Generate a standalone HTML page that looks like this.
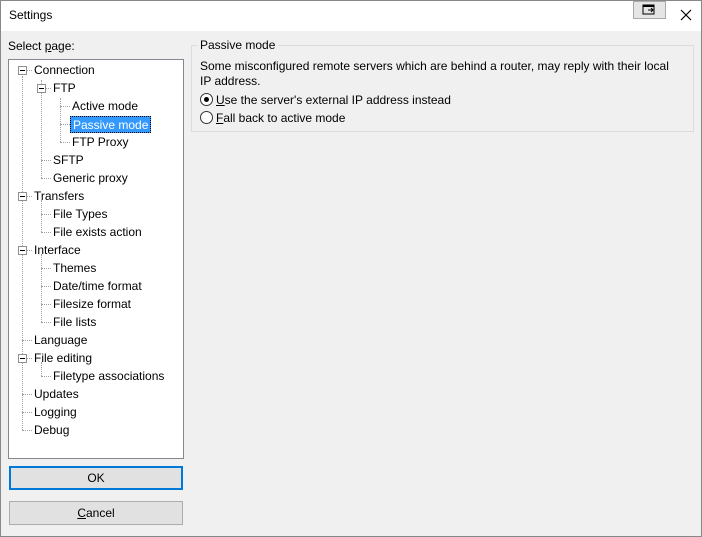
<!DOCTYPE html><html><head><style>
*{margin:0;padding:0;box-sizing:border-box}
body{width:702px;height:537px;background:#f0f0f0;font:12px "Liberation Sans",sans-serif;color:#000;position:relative;overflow:hidden}
.a{position:absolute;white-space:nowrap}
.win{position:absolute;left:0;top:0;width:702px;height:537px;border:1px solid #888}
.title{position:absolute;left:1px;top:1px;width:700px;height:30px;background:#fff}
.tree{position:absolute;left:8px;top:59px;width:176px;height:400px;background:#fff;border:1px solid #828790}
.it{position:absolute;height:16px;line-height:16px;white-space:nowrap}
.dv{position:absolute;border-left:1px dotted #a0a0a0;width:0}
.dh{position:absolute;border-top:1px dotted #a0a0a0;height:0}
.bx{position:absolute;width:9px;height:9px;border:1px solid #919191;background:#fff}
.bx:after{content:"";position:absolute;left:1px;top:3px;width:5px;height:1px;background:#000}
.btn{position:absolute;left:9px;width:174px;height:24px;background:#e1e1e1;border:1px solid #adadad;text-align:center;line-height:22px}
.rad{position:absolute;width:13px;height:13px;border:1px solid #333;border-radius:50%;background:#fff}
</style></head><body>
<div class="win"></div>
<div class="title"></div>
<div class="a" style="left:9px;top:8px">Settings</div>
<div class="a" style="left:633px;top:1px;width:33px;height:18px;border:1px solid #aaa;background:#e5e5e5"></div>
<svg class="a" style="left:642px;top:4px" width="14" height="12"><rect x="1" y="1" width="11" height="9" fill="none" stroke="#000" stroke-width="1"/><line x1="1" y1="2" x2="12" y2="2" stroke="#000" stroke-width="2"/><path d="M6 6h5M9 4l2 2-2 2" stroke="#000" fill="none"/></svg>
<svg class="a" style="left:680px;top:9px" width="12" height="12"><path d="M1 1L11 11M11 1L1 11" stroke="#000" stroke-width="1.2"/></svg>
<div class="a" style="left:8px;top:39px">Select <u>p</u>age:</div>
<div class="tree"></div>
<!-- tree lines -->
<div class="dv" style="left:22px;top:76px;height:354px"></div>
<div class="dv" style="left:41px;top:80px;height:98px"></div>
<div class="dv" style="left:60px;top:98px;height:44px"></div>
<div class="dv" style="left:41px;top:200px;height:32px"></div>
<div class="dv" style="left:41px;top:254px;height:68px"></div>
<div class="dv" style="left:41px;top:362px;height:14px"></div>
<div class="dh" style="left:27px;top:70px;width:5px"></div>
<div class="dh" style="left:46px;top:88px;width:5px"></div>
<div class="dh" style="left:60px;top:106px;width:10px"></div>
<div class="dh" style="left:60px;top:124px;width:10px"></div>
<div class="dh" style="left:60px;top:142px;width:10px"></div>
<div class="dh" style="left:41px;top:160px;width:10px"></div>
<div class="dh" style="left:41px;top:178px;width:10px"></div>
<div class="dh" style="left:27px;top:196px;width:5px"></div>
<div class="dh" style="left:41px;top:214px;width:10px"></div>
<div class="dh" style="left:41px;top:232px;width:10px"></div>
<div class="dh" style="left:27px;top:250px;width:5px"></div>
<div class="dh" style="left:41px;top:268px;width:10px"></div>
<div class="dh" style="left:41px;top:286px;width:10px"></div>
<div class="dh" style="left:41px;top:304px;width:10px"></div>
<div class="dh" style="left:41px;top:322px;width:10px"></div>
<div class="dh" style="left:22px;top:340px;width:10px"></div>
<div class="dh" style="left:27px;top:358px;width:5px"></div>
<div class="dh" style="left:41px;top:376px;width:10px"></div>
<div class="dh" style="left:22px;top:394px;width:10px"></div>
<div class="dh" style="left:22px;top:412px;width:10px"></div>
<div class="dh" style="left:22px;top:430px;width:10px"></div>
<div class="bx" style="left:18px;top:66px"></div>
<div class="bx" style="left:37px;top:84px"></div>
<div class="bx" style="left:18px;top:192px"></div>
<div class="bx" style="left:18px;top:246px"></div>
<div class="bx" style="left:18px;top:354px"></div>
<div class="it" style="left:34px;top:62px">Connection</div>
<div class="it" style="left:53px;top:80px">FTP</div>
<div class="it" style="left:72px;top:98px">Active mode</div>
<div class="it" style="left:70px;top:116px;background:#3399ff;color:#fff;padding:0 2px;border:1px dotted #000;height:17px">Passive mode</div>
<div class="it" style="left:72px;top:134px">FTP Proxy</div>
<div class="it" style="left:53px;top:152px">SFTP</div>
<div class="it" style="left:53px;top:170px">Generic proxy</div>
<div class="it" style="left:34px;top:188px">Transfers</div>
<div class="it" style="left:53px;top:206px">File Types</div>
<div class="it" style="left:53px;top:224px">File exists action</div>
<div class="it" style="left:34px;top:242px">Interface</div>
<div class="it" style="left:53px;top:260px">Themes</div>
<div class="it" style="left:53px;top:278px">Date/time format</div>
<div class="it" style="left:53px;top:296px">Filesize format</div>
<div class="it" style="left:53px;top:314px">File lists</div>
<div class="it" style="left:34px;top:332px">Language</div>
<div class="it" style="left:34px;top:350px">File editing</div>
<div class="it" style="left:53px;top:368px">Filetype associations</div>
<div class="it" style="left:34px;top:386px">Updates</div>
<div class="it" style="left:34px;top:404px">Logging</div>
<div class="it" style="left:34px;top:422px">Debug</div>
<div class="btn" style="top:466px;border:2px solid #0078d7;line-height:20px">OK</div>
<div class="btn" style="top:501px"><u>C</u>ancel</div>
<div class="a" style="left:191px;top:45px;width:503px;height:87px;border:1px solid #dcdcdc"></div>
<div class="a" style="left:197px;top:38px;background:#f0f0f0;padding:0 3px">Passive mode</div>
<div class="a" style="left:200px;top:59px;line-height:15px">Some misconfigured remote servers which are behind a router, may reply with their local<br>IP address.</div>
<div class="rad" style="left:200px;top:93px"><div style="position:absolute;left:3px;top:3px;width:5px;height:5px;border-radius:50%;background:#000"></div></div>
<div class="a" style="left:216px;top:93px"><u>U</u>se the server's external IP address instead</div>
<div class="rad" style="left:200px;top:111px"></div>
<div class="a" style="left:216px;top:111px"><u>F</u>all back to active mode</div>
</body></html>
